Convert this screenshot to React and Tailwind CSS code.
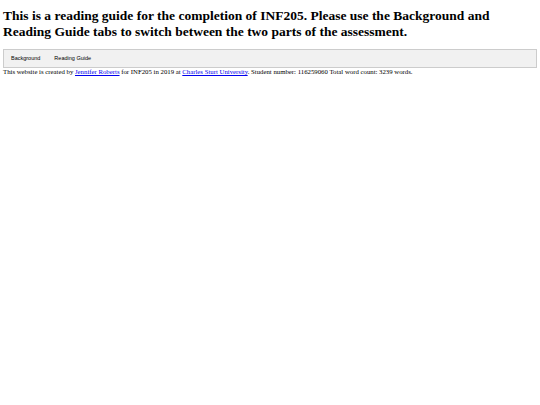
export default function App() {
  return (
    <div className="min-h-[405px] bg-white px-[3px] pt-[8px] text-black font-['Liberation_Serif',serif]">
      <h1 className="font-bold text-[13.5px] leading-[16px] mb-[9px]">
        This is a reading guide for the completion of INF205. Please use the Background and Reading Guide tabs to switch between the two parts of the assessment.
      </h1>
      <div className="flex h-[19px] items-center border border-[#cccccc] bg-[#f1f1f1] font-['Liberation_Sans',Arial,sans-serif]">
        <button className="h-full px-[7px] text-[5.5px] text-black">Background</button>
        <button className="h-full px-[7px] text-[5.5px] text-black">Reading Guide</button>
      </div>
      <p className="text-[6.77px] leading-[8px]">
        This website is created by{" "}
        <a href="#" className="text-[#0000ee] underline">Jennifer Roberts</a>{" "}
        for INF205 in 2019 at{" "}
        <a href="#" className="text-[#0000ee] underline">Charles Sturt University</a>. Student number: 116259060 Total word count: 3239 words.
      </p>
    </div>
  );
}
